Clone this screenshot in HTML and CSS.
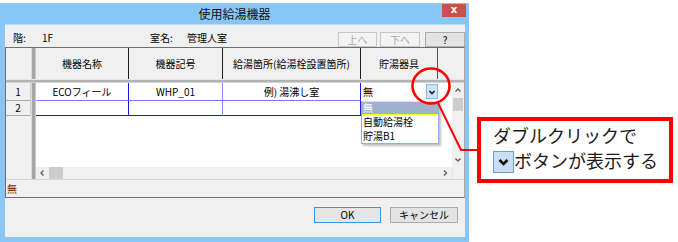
FILE: index.html
```html
<!DOCTYPE html>
<html lang="ja"><head>
<meta charset="utf-8"><title>使用給湯機器</title>
<link rel="stylesheet" href="styles.css">
</head>
<body>
<div class="win">
  <div class="titlebar">
    <span class="title">使用給湯機器</span>
    <span class="close">x</span>
  </div>
  <div class="client">
    <div class="info">
      <span class="lbl kai">階:</span><span class="lbl fl">1F</span>
      <span class="lbl room">室名:</span><span class="lbl">管理人室</span>
      <span class="tbtns">
        <span class="btn dis up">上へ</span>
        <span class="btn dis down">下へ</span>
        <span class="btn help">?</span>
      </span>
    </div>
    <div class="grid">
      <div class="ghead">
        <div class="rh"></div><div class="vsplit"></div>
        <div class="hc c1">機器名称</div>
        <div class="hc c2">機器記号</div>
        <div class="hc c3">給湯箇所(給湯栓設置箇所)</div>
        <div class="hc c4">貯湯器具</div>
        <div class="hc c5"></div>
      </div>
      <div class="hsplit"></div>
      <div class="gbody">
        <div class="rhcol">
          <div class="rn r1">1</div>
          <div class="rn r2">2</div>
        </div>
        <div class="vsplit"></div>
        <div class="cells">
          <div class="row r1">
            <div class="cell c1">ECOフィール</div>
            <div class="cell c2">WHP_01</div>
            <div class="cell c3">例) 湯沸し室</div>
            <div class="cell c4 combo">
              <span class="cval">無</span>
              <span class="ddbtn"><svg width="10" height="12" viewBox="0 0 10 12"><path d="M2.5 5 L5 7.5 L7.5 5" fill="none" stroke="#1a1a1a" stroke-width="1.6"/></svg></span>
              <div class="ddlist">
                <div class="item sel">無</div>
                <div class="item">自動給湯栓</div>
                <div class="item">貯湯B1</div>
              </div>
            </div>
          </div>
          <div class="row r2">
            <div class="cell c1"></div>
            <div class="cell c2"></div>
            <div class="cell c3"></div>
            <div class="cell c4"></div>
          </div>
        </div>
        <div class="filler"></div>
        <div class="vscroll">
          <span class="arr"><svg width="12" height="14" viewBox="0 0 12 14"><path d="M3.5 8.5 L6 6 L8.5 8.5" fill="none" stroke="#606060" stroke-width="1.4"/></svg></span>
          <span class="vthumb"></span>
          <span class="vtrack"></span>
          <span class="arr"><svg width="12" height="14" viewBox="0 0 12 14"><path d="M3.5 5.5 L6 8 L8.5 5.5" fill="none" stroke="#606060" stroke-width="1.4"/></svg></span>
        </div>
      </div>
      <div class="hbar">
        <div class="rh"></div><div class="vsplit"></div>
        <div class="hscroll">
          <span class="harr"><svg width="12" height="12" viewBox="0 0 12 12"><path d="M7.5 3.5 L5 6 L7.5 8.5" fill="none" stroke="#606060" stroke-width="1.4"/></svg></span>
          <span class="hthumb"></span>
          <span class="htrack"></span>
          <span class="harr"><svg width="12" height="12" viewBox="0 0 12 12"><path d="M5 3.5 L7.5 6 L5 8.5" fill="none" stroke="#606060" stroke-width="1.4"/></svg></span>
        </div>
        <div class="corner"></div>
      </div>
      <div class="status">無</div>
    </div>
    <div class="foot">
      <span class="btn ok">OK</span>
      <span class="btn cancel">キャンセル</span>
    </div>
  </div>
</div>

<div class="callout">
  ダブルクリックで<br>
  <span class="ico"><svg width="19" height="20" viewBox="0 0 19 20"><path d="M5.5 8 L9.5 12 L13.5 8" fill="none" stroke="#111" stroke-width="2.6"/></svg></span>ボタンが表示する
</div>

<svg class="marks" width="678" height="242" viewBox="0 0 678 242">
  <ellipse cx="431" cy="86" rx="18.5" ry="17.5" fill="none" stroke="#ff0000" stroke-width="2.6"/>
  <polyline points="438,103 461,150 478,150" fill="none" stroke="#ff0000" stroke-width="2"/>
</svg>
</body></html>
```

FILE: styles.css
```css
* {
box-sizing: border-box;
}
body {
margin: 0;
width: 678px;
height: 242px;
overflow: hidden;
position: relative;
background: #fff;
display: flex;
align-items: flex-start;
font-family: "Noto Sans CJK JP", sans-serif;
}
.win {
margin-top: 3px;
width: 469px;
height: 239px;
flex-shrink: 0;
background: #88c6f8;
display: flex;
flex-direction: column;
}
.titlebar {
height: 21px;
display: grid;
grid-template-columns: 1fr auto 1fr;
}
.title {
grid-column: 2;
font-size: 12px;
line-height: 21px;
color: #111;
}
.close {
grid-column: 3;
justify-self: end;
margin: 1px 3px 0 0;
width: 24px;
height: 13px;
background: #c75050;
color: #fff;
font: bold 10px/12px "DejaVu Sans", sans-serif;
text-align: center;
}
.client {
flex: 1;
margin: 0 4px 5px 5px;
background: #f0f0f0;
border-top: 1px solid #b8dcfa;
font-size: 10px;
color: #000;
display: flex;
flex-direction: column;
}

/* 上の情報行 */
.info {
height: 22px;
display: flex;
align-items: flex-end;
}
.lbl {
line-height: 15px;
margin-bottom: 2px;
}
.kai {
margin-left: 8px;
width: 29px;
}
.fl {
width: 108px;
}
.room {
width: 37px;
}
.tbtns {
margin-left: auto;
display: flex;
}
.btn {
display: block;
height: 15px;
border: 1px solid #adadad;
background: #e3e3e3;
text-align: center;
line-height: 13px;
}
.btn.dis {
border-color: #c6c6c6;
background: #f3f3f3;
color: #a8a8a8;
}
.up {
width: 39px;
}
.down {
width: 40px;
margin-left: 3px;
}
.help {
width: 40px;
margin-left: 5px;
}

/* 表 */
.grid {
height: 151px;
border: 1px solid #6e6e6e;
border-right-color: #a8a8a8;
background: #f0f0f0;
display: flex;
flex-direction: column;
}
.ghead {
height: 31px;
display: flex;
}
.rh {
width: 25px;
}
.vsplit {
width: 5px;
background: linear-gradient(to right, #dadada 0 1px, #a6a6a6 1px 4px, #c8c8c8 4px);
}
.hc {
border-right: 1px solid #1e1e1e;
text-align: center;
line-height: 31px;
white-space: nowrap;
}
.c1 {
width: 93px;
}
.c2 {
width: 94px;
}
.c3 {
width: 138px;
}
.c4 {
width: 77px;
}
.hc.c4 {
border-right-color: #555;
}
.hc.c5 {
flex: 1;
border-right: none;
}
.hsplit {
height: 4px;
background: linear-gradient(#e6e6e6 0 1px, #b2b2b2 1px 3px, #d2d2d2 3px);
}
.gbody {
height: 84px;
display: flex;
}
.rhcol {
width: 25px;
}
.rn {
text-align: center;
border-bottom: 1px solid #a9a9a9;
border-right: 1px solid #d0d0d0;
}
.rn.r1 {
height: 18px;
line-height: 17px;
}
.rn.r2 {
height: 15px;
line-height: 14px;
}
.cells {
width: 402px;
background: #fff;
}
.row {
display: flex;
}
.row.r1 {
height: 18px;
}
.row.r2 {
height: 15px;
}
.cell {
text-align: center;
white-space: nowrap;
}
.r1 .cell {
line-height: 17px;
border-bottom: 1px solid #7878ff;
}
.r2 .cell {
border-bottom: 1px solid #1818ee;
}
.cell.c1 {
border-right: 1px solid #1818ee;
}
.cell.c2 {
border-right: 1px solid #8a8aff;
}
.cell.c3 {
border-right: 1px solid #1818ee;
}
.cell.c4 {
border-bottom: none;
}
.combo {
position: relative;
display: flex;
text-align: left;
}
.cval {
padding-left: 2px;
}
.ddbtn {
margin: 1px 0 0 auto;
width: 12px;
height: 15px;
background: #cde2f8;
border: 1px solid #8db7e3;
display: flex;
align-items: center;
justify-content: center;
}
.ddlist {
position: absolute;
top: 18px;
left: 0;
width: 78px;
background: #fff;
border: 1px solid #86b5e6;
border-top: none;
box-shadow: 2px 2px 2px rgba(0, 0, 0, 0.25);
}
.item {
height: 14px;
line-height: 14px;
padding-left: 1px;
}
.item.sel {
background: #9db2cc;
color: #fff;
border-top: 1px solid #ffff20;
border-bottom: 1px solid #ffff20;
line-height: 12px;
}
.filler {
width: 14px;
background: #fff;
}
.vscroll {
width: 12px;
display: flex;
flex-direction: column;
}
.arr {
height: 14px;
}
.vthumb {
margin: 1px 1px 0;
height: 13px;
background: #cdcdcd;
}
.vtrack {
flex: 1;
}
.hbar {
height: 12px;
display: flex;
}
.hscroll {
width: 416px;
display: flex;
}
.harr {
width: 13px;
}
.hthumb {
width: 14px;
background: #cdcdcd;
}
.htrack {
flex: 1;
}
.corner {
flex: 1;
border-left: 1px solid #e4e4e4;
}
.status {
height: 18px;
border-top: 1px solid #d6d6d6;
padding-left: 1px;
line-height: 17px;
color: #6a2c10;
}

/* 下のボタン */
.foot {
display: flex;
justify-content: flex-end;
padding: 9px 7px 0 0;
}
.ok {
width: 67px;
height: 16px;
line-height: 14px;
border-color: #3c93e0;
background: #e5e5e5;
}
.cancel {
width: 68px;
height: 16px;
line-height: 14px;
margin-left: 9px;
}

/* 説明の吹き出し */
.callout {
margin: 117px 0 0 8px;
width: 196px;
height: 66px;
flex-shrink: 0;
border: 4px solid #ff0000;
background: #fff;
padding: 2px 0 0 12px;
font-size: 18px;
line-height: 25px;
color: #1a1a1a;
white-space: nowrap;
}
.ico {
display: inline-block;
width: 21px;
height: 22px;
vertical-align: -5px;
background: #c8def6;
border: 1px solid #6b9fd6;
}
.ico svg {
display: block;
}
.marks {
position: absolute;
left: 0;
top: 0;
pointer-events: none;
}
```
